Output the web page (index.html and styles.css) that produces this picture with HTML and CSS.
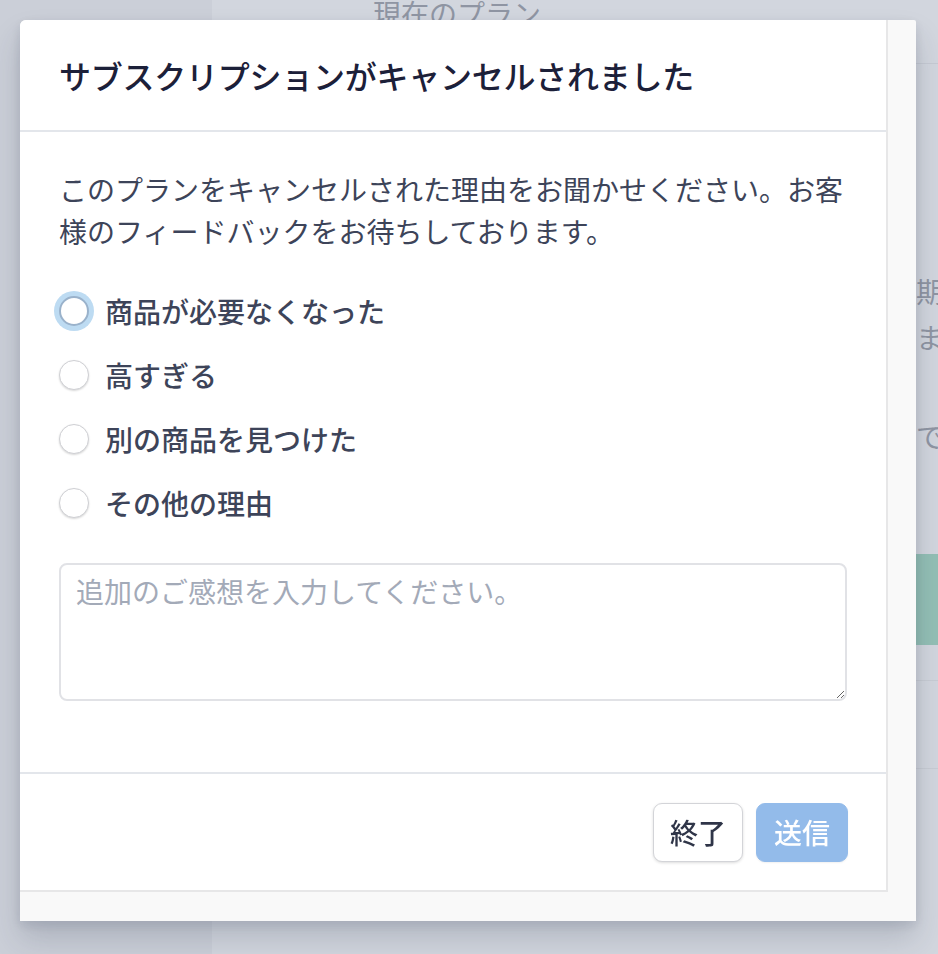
FILE: index.html
```html
<!DOCTYPE html>
<html lang="ja">
<head>
<meta charset="utf-8">
<title>サブスクリプションがキャンセルされました</title>
<link rel="stylesheet" href="styles.css">
</head>
<body>
<div class="app">
  <aside class="sidebar"></aside>
  <main class="main">
    <header class="main-head"><h2 class="main-title">現在のプラン</h2></header>
    <section class="plan">
      <div class="plan-left"></div>
      <div class="plan-right">
        <p class="plan-text">期間終了日<br>まで</p>
        <p class="plan-text plan-text-2">で</p>
        <div class="plan-btn"></div>
        <div class="plan-row"></div>
        <div class="plan-row plan-row-2"></div>
      </div>
    </section>
  </main>
</div>

<div class="modal" role="dialog" aria-labelledby="modal-title">
  <div class="modal-inner">
    <header class="modal-header">
      <h1 id="modal-title" class="modal-title">サブスクリプションがキャンセルされました</h1>
    </header>
    <div class="modal-body">
      <p class="intro">このプランをキャンセルされた理由をお聞かせください。お客様のフィードバックをお待ちしております。</p>
      <ul class="options">
        <li class="option"><label class="option-label"><input type="radio" name="reason" class="radio radio-focus"><span>商品が必要なくなった</span></label></li>
        <li class="option"><label class="option-label"><input type="radio" name="reason" class="radio"><span>高すぎる</span></label></li>
        <li class="option"><label class="option-label"><input type="radio" name="reason" class="radio"><span>別の商品を見つけた</span></label></li>
        <li class="option"><label class="option-label"><input type="radio" name="reason" class="radio"><span>その他の理由</span></label></li>
      </ul>
      <textarea class="feedback" placeholder="追加のご感想を入力してください。"></textarea>
    </div>
    <footer class="modal-footer">
      <button class="btn btn-secondary" type="button">終了</button>
      <button class="btn btn-primary" type="button">送信</button>
    </footer>
  </div>
</div>
</body>
</html>
```
FILE: styles.css
```css
* { box-sizing: border-box; }
html, body {
  margin: 0;
  padding: 0;
  height: 100%;
}
body {
  font-family: "Noto Sans CJK JP", "Noto Sans", sans-serif;
  background: #d2d6de;
  overflow: hidden;
}

/* background page (dimmed) */
.app {
  display: flex;
  height: 954px;
}
.sidebar {
  width: 212px;
  flex: none;
  background: #cbcfd8;
}
.main {
  flex: 1;
  background: #d2d6de;
}
.main-head {
  height: 64px;
  border-bottom: 1px solid #c6cad3;
  padding-left: 161px;
}
.main-title {
  margin: 0;
  font-size: 28px;
  line-height: 26px;
  font-weight: 400;
  color: #8f95a3;
}
.plan {
  display: flex;
}
.plan-left {
  width: 704px;
  flex: none;
}
.plan-right {
  flex: 1;
  padding-top: 204px;
}
.plan-text {
  margin: 0;
  font-size: 28px;
  line-height: 46px;
  color: #8f95a3;
  white-space: nowrap;
}
.plan-text-2 {
  margin-top: 53px;
}
.plan-btn {
  margin-top: 95px;
  height: 91px;
  background: #93bfb5;
}
.plan-row {
  height: 36px;
  border-bottom: 1px solid #c8ccd4;
}
.plan-row-2 {
  height: 88px;
}

/* modal */
.modal {
  position: fixed;
  left: 20px;
  top: 20px;
  width: 896px;
  height: 901px;
  background: #f9f9f9;
  border-radius: 6px 2px 0 0;
  padding: 0 28px 29px 0;
  box-shadow: 0 18px 30px rgba(40, 48, 70, 0.18), 0 4px 12px rgba(40, 48, 70, 0.12);
}
.modal-inner {
  height: 100%;
  background: #fff;
  border-right: 2px solid #e7e7e8;
  border-bottom: 2px solid #e7e7e8;
  border-radius: 6px 0 0 0;
  display: flex;
  flex-direction: column;
}
.modal-header {
  height: 112px;
  padding: 35px 39px 0 39px;
  border-bottom: 2px solid #e3e6eb;
}
.modal-title {
  margin: 0;
  font-size: 32px;
  line-height: 40px;
  font-weight: 500;
  letter-spacing: -0.25px;
  color: #1c2039;
}
.modal-body {
  padding: 36px 39px 0 39px;
  height: 642px;
  border-bottom: 2px solid #e3e6eb;
}
.intro {
  margin: 0;
  font-size: 28px;
  line-height: 42px;
  color: #3d4459;
}
.options {
  list-style: none;
  margin: 38px 0 0 0;
  padding: 0;
  display: flex;
  flex-direction: column;
  gap: 22px;
}
.option-label {
  display: flex;
  align-items: center;
  gap: 16px;
  font-size: 28px;
  line-height: 42px;
  font-weight: 500;
  color: #3d4459;
}
.radio {
  appearance: none;
  -webkit-appearance: none;
  margin: 0;
  width: 30px;
  height: 30px;
  flex: none;
  border-radius: 50%;
  border: 1px solid #cfd0d4;
  background: #fff;
  box-shadow: 0 1px 2px rgba(0, 0, 0, 0.16);
}
.radio-focus {
  border: 2px solid #9ab2cb;
  box-shadow: 0 0 0 5px #bddbf2;
}
.feedback {
  display: block;
  margin-top: 39px;
  width: 100%;
  height: 138px;
  border: 2px solid #e1e2e6;
  border-radius: 8px;
  padding: 5px 15px;
  font-family: inherit;
  font-size: 28px;
  line-height: 42px;
  color: #3d4459;
  resize: both;
  outline: none;
}
.feedback::placeholder {
  color: #a3aab8;
}
.modal-footer {
  flex: 1;
  display: flex;
  justify-content: flex-end;
  align-items: center;
  gap: 13px;
  padding: 0 38px 0 0;
}
.btn {
  font-family: inherit;
  font-size: 28px;
  font-weight: 500;
  line-height: 1;
  height: 59px;
  border-radius: 9px;
  padding: 0;
  cursor: pointer;
}
.btn-secondary {
  width: 90px;
  background: #fff;
  color: #2f3548;
  border: 1px solid #d3d4d8;
  box-shadow: 0 1px 3px rgba(0, 0, 0, 0.14);
}
.btn-primary {
  width: 92px;
  background: #93bbea;
  color: #fff;
  border: 1px solid #93bbea;
  box-shadow: 0 1px 2px rgba(0, 0, 0, 0.06);
}
```
